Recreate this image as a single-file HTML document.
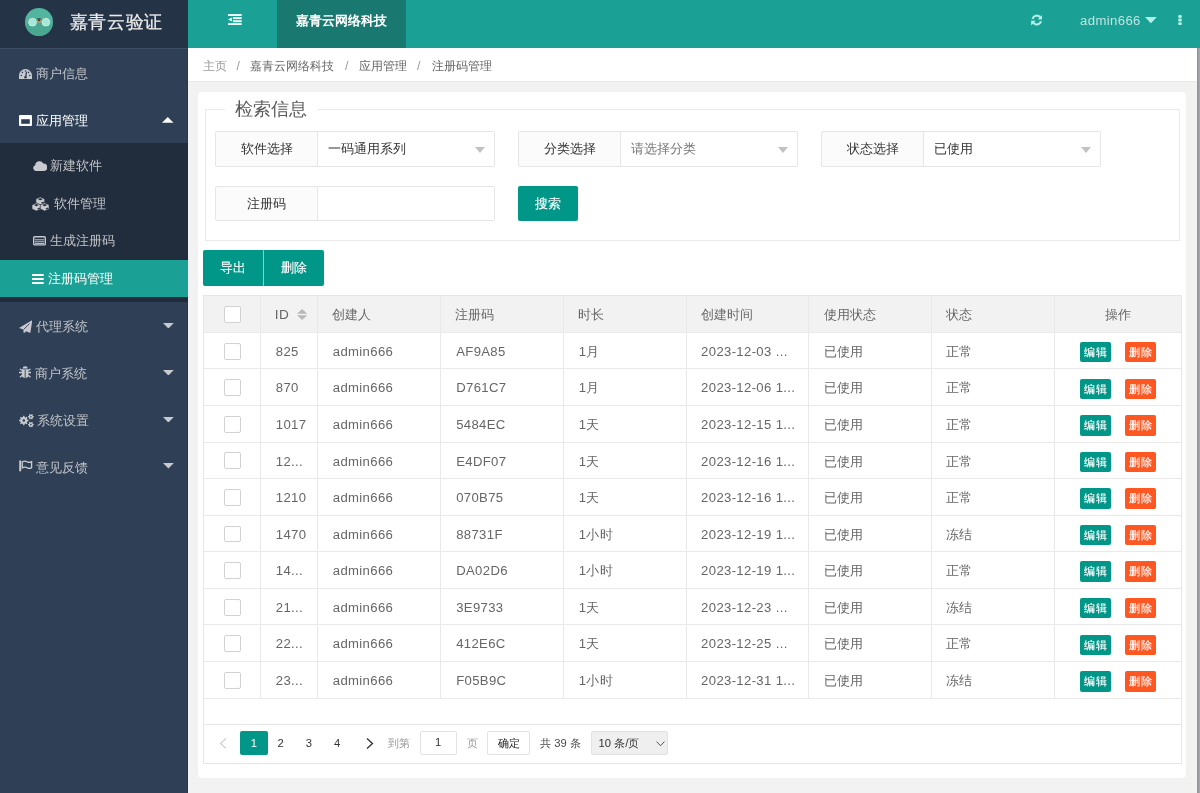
<!DOCTYPE html>
<html><head><meta charset="utf-8">
<style>
*{margin:0;padding:0;box-sizing:border-box}
html{will-change:transform}
html,body{width:1200px;height:793px;overflow:hidden;background:#f2f2f2;font-family:"Liberation Sans",sans-serif;font-size:13.125px;color:#666}
.abs{position:absolute}
svg{display:block}
/* header */
#logo{left:0;top:0;width:187.5px;height:49px;background:#243346;border-bottom:1.1px solid #3b5064}
#logo .t{left:69.5px;top:10px;font-size:18.2px;letter-spacing:.7px;line-height:24px;color:#ececec;-webkit-text-stroke:.25px #ececec;white-space:nowrap}
#hdr{left:187.5px;top:0;width:1012.5px;height:47.8px;background:#1aa094;box-shadow:0 1px 1px rgba(0,30,40,.25)}
#hsel{left:276.6px;top:0;width:129.4px;height:47.8px;background:#197971;color:#fff;font-weight:bold;font-size:13.125px;line-height:41px;text-align:center}
#uname{left:1080px;top:11.8px;line-height:18px;color:rgba(255,255,255,.72);font-size:13.125px;letter-spacing:.4px}
/* side */
#side{left:0;top:48.8px;width:187.5px;height:745px;background:#2f4056;box-shadow:inset -1px 0 1px rgba(0,0,0,.12)}
.mi{position:absolute;left:0;width:187.5px;height:46.875px;line-height:46.875px;color:#c2c4c8;white-space:nowrap}
.mi .tx{position:absolute;top:2px}
.mi svg{position:absolute}
#child{left:0;top:142.6px;width:187.5px;height:159.4px;background:#212d3c}
.ci{position:absolute;left:0;width:187.5px;height:37.5px;line-height:37.5px;color:#c2c4c8;white-space:nowrap}
.ci .tx{position:absolute;top:0.1px}
.ci svg{position:absolute}
/* body */
#crumb{left:187.5px;top:48px;width:1009.5px;height:33.5px;background:#fff;border-bottom:1px solid #e8e8e8;font-size:12.19px;white-space:nowrap}
#crumb span{position:absolute;top:9.6px;line-height:16px;color:#666}
#scroll{left:1197px;top:48px;width:3px;height:745px;background:linear-gradient(90deg,#8e9094,#a9abae)}
#card{left:197.9px;top:92px;width:988.4px;height:685.6px;background:#fff;border-radius:4px}
#fs{left:205px;top:109px;width:975px;height:131.5px;border:1px solid #eaeaea}
#legend{left:224.8px;top:97px;width:93px;height:24px;background:#fff;color:#5a5a5a;font-size:18.2px;line-height:24px;text-align:center;font-weight:300}
.lab{position:absolute;height:35.6px;width:102.7px;padding-left:1.2px;background:#fbfbfb;border:1px solid #e6e6e6;border-radius:2px 0 0 2px;color:#333;text-align:center;line-height:34px;white-space:nowrap}
.inp{position:absolute;height:35.6px;width:177.5px;background:#fff;border:1px solid #e6e6e6;border-left:none;border-radius:0 2px 2px 0;color:#333;padding-left:10.3px;line-height:34px;white-space:nowrap}
.inp.ph{color:#777}
.arr{position:absolute;right:9.2px;top:14.6px;width:0;height:0;border-left:5.6px solid transparent;border-right:5.6px solid transparent;border-top:6px solid #c2c2c2}
.btn{position:absolute;background:#009688;color:#fff;text-align:center;border-radius:2px;white-space:nowrap;-webkit-text-stroke:.12px #fff}
/* table */
#tbl{height:469.4px;border:1px solid #e6e6e6;background:#fff}
.row{position:absolute;left:0;width:977.2px;height:36.5625px;border-bottom:1px solid #e9e9e9}
.row.h{background:#f2f2f2}
.c{position:absolute;top:0;height:100%;border-right:1px solid #e9e9e9;white-space:nowrap;overflow:hidden;line-height:37.8px;padding-left:15px;color:#666;letter-spacing:.35px}
.cb{position:absolute;width:16.8px;height:16.8px;border:1px solid #d2d2d2;border-radius:2px;background:#fff}
.bx{position:absolute;top:9.2px;width:31.4px;height:20.4px;line-height:20.4px;font-size:11.25px;-webkit-text-stroke:.15px #fff;color:#fff;text-align:center;border-radius:2px}
.pgn{top:730.8px;width:20px;height:24.3px;line-height:24.3px;text-align:center;font-size:11.25px;color:#333}
.pgt{top:730.8px;height:24.3px;line-height:24.3px;font-size:11.25px;white-space:nowrap}
#pager{left:0;top:427.9px;width:977.2px;height:40px;border-top:1px solid #e6e6e6}
</style></head><body>
<div id="logo" class="abs">
  <svg class="abs" style="left:25px;top:7.5px" width="28" height="28" viewBox="0 0 28 28">
    <circle cx="14" cy="14" r="14" fill="#52b5a0"/>
    <path d="M0.08 15.5 L11 15.5 L14 14 L17 15.5 L27.92 15.5 A14 14 0 0 1 0.08 15.5 Z" fill="#4aa792"/>
    <path d="M3.2 13.2 Q7.2 9 11.4 12.2 M16.6 12.2 Q20.8 9 24.8 13.2" stroke="#7d7a48" stroke-width="1.2" fill="none"/>
    <circle cx="7.5" cy="14.2" r="3.9" fill="#a6e6d9" stroke="#d6f3ec" stroke-width=".7"/>
    <circle cx="20.9" cy="14.2" r="3.9" fill="#a6e6d9" stroke="#d6f3ec" stroke-width=".7"/>
    <ellipse cx="14" cy="11.2" rx="2.2" ry="1.2" fill="#2d5f50"/>
    <ellipse cx="14" cy="12.8" rx="2.2" ry="1.9" fill="#c48e5f"/>
    <circle cx="14" cy="12.2" r=".9" fill="#2a1c12"/>
  </svg>
  <div class="abs t">嘉青云验证</div>
</div>
<div id="hdr" class="abs"></div>
<svg class="abs" style="left:228.4px;top:13.9px" width="14" height="11.2" viewBox="0 0 14 11.2">
  <rect x="0" y="0" width="13.7" height="2" fill="#eafffb"/>
  <rect x="4.9" y="3.1" width="8.8" height="2" fill="#eafffb"/>
  <rect x="4.9" y="6.2" width="8.8" height="2" fill="#eafffb"/>
  <rect x="0" y="9.2" width="13.7" height="2" fill="#eafffb"/>
  <path d="M3.8 3.6 L0 5.6 L3.8 7.6 Z" fill="#eafffb"/>
</svg>
<div id="hsel" class="abs">嘉青云网络科技</div>
<svg class="abs" style="left:1030.8px;top:14.2px" width="11.6" height="12" viewBox="0 0 11.6 12">
  <path d="M1.55 4.96 A4.4 4.4 0 0 1 9.17 3.27" stroke="#b4efe6" stroke-width="2.1" fill="none"/>
  <path d="M11.5 0.6 V5.4 H6.7 Z" fill="#b4efe6"/>
  <path d="M10.05 7.24 A4.4 4.4 0 0 1 2.43 8.93" stroke="#b4efe6" stroke-width="2.1" fill="none"/>
  <path d="M0.1 11.6 V6.8 H4.9 Z" fill="#b4efe6"/>
</svg>
<div id="uname" class="abs">admin666</div>
<svg class="abs" style="left:1145.2px;top:16.8px" width="11.8" height="6.4" viewBox="0 0 11.8 6.4"><path d="M0 0 H11.8 L5.9 6.4 Z" fill="#b0f0e6"/></svg>
<svg class="abs" style="left:1177.9px;top:15px" width="4" height="10.2" viewBox="0 0 4 10.2">
  <rect x="0.2" y="0" width="3.6" height="3" rx="1.2" fill="#b0f0e6"/><rect x="0.2" y="3.6" width="3.6" height="3" rx="1.2" fill="#b0f0e6"/><rect x="0.2" y="7.2" width="3.6" height="3" rx="1.2" fill="#b0f0e6"/>
</svg>

<div id="side" class="abs"></div>

<div class="mi" style="top:48.8px">
  <svg style="left:18.7px;top:20.5px" width="13" height="10" viewBox="0 0 13 10"><path d="M0 10 L0 6.5 A6.5 6.5 0 0 1 13 6.5 L13 10 Z" fill="#c8cacf"/><path d="M6.5 8.8 L7.6 2.6" stroke="#2f4056" stroke-width="1.3"/><circle cx="6.5" cy="8.3" r="1.3" fill="#2f4056"/><circle cx="2.3" cy="6.5" r=".8" fill="#2f4056"/><circle cx="3.4" cy="3.4" r=".8" fill="#2f4056"/><circle cx="6.5" cy="2" r=".8" fill="#2f4056"/><circle cx="9.6" cy="3.4" r=".8" fill="#2f4056"/><circle cx="10.7" cy="6.5" r=".8" fill="#2f4056"/></svg>
  <span class="tx" style="left:36.4px">商户信息</span>
</div>
<div class="mi" style="top:95.7px;color:#fff">
  <svg style="left:18.7px;top:19.5px" width="13" height="11" viewBox="0 0 13 11"><rect x="0" y="0" width="13" height="11" rx="1" fill="#fff"/><rect x="2.2" y="4.2" width="8.6" height="4.6" fill="#2f4056"/></svg>
  <span class="tx" style="left:36.4px">应用管理</span>
  <svg style="left:162.3px;top:21.4px" width="11.5" height="5.8" viewBox="0 0 11.5 5.8"><path d="M0 5.8 H11.5 L5.75 0 Z" fill="#fff"/></svg>
</div>
<div id="child" class="abs"></div>
<div class="ci" style="top:147.3px">
  <svg style="left:32.7px;top:12.9px" width="14" height="11" viewBox="0 0 14 11"><path d="M3 11 A3 3 0 0 1 2.2 5.2 A4.3 4.3 0 0 1 10.3 3.6 A3.7 3.7 0 0 1 11 11 Z" fill="#c8cacf"/></svg>
  <span class="tx" style="left:50.4px">新建软件</span>
</div>
<div class="ci" style="top:184.8px">
  <svg style="left:32.2px;top:12.2px" width="17.2" height="14.2" viewBox="0 0 17.2 14.2"><g transform="translate(3.9,0)"><path d="M4.4 0 L8.8 2 L8.8 6.1 L4.4 8.1 L0 6.1 L0 2 Z" fill="#c8cacf" stroke="#212d3c" stroke-width=".6"/><path d="M4.4 1.1 L6.9 2.2 L4.4 3.3 L1.9 2.2 Z" fill="#212d3c"/><path d="M5.6 6.1 L7.9 5" stroke="#212d3c" stroke-width="1.1"/></g><g transform="translate(0,5.9)"><path d="M4.4 0 L8.8 2 L8.8 6.1 L4.4 8.1 L0 6.1 L0 2 Z" fill="#c8cacf" stroke="#212d3c" stroke-width=".6"/><path d="M4.4 1.1 L6.9 2.2 L4.4 3.3 L1.9 2.2 Z" fill="#212d3c"/><path d="M5.6 6.1 L7.9 5" stroke="#212d3c" stroke-width="1.1"/></g><g transform="translate(8.3,5.9)"><path d="M4.4 0 L8.8 2 L8.8 6.1 L4.4 8.1 L0 6.1 L0 2 Z" fill="#c8cacf" stroke="#212d3c" stroke-width=".6"/><path d="M4.4 1.1 L6.9 2.2 L4.4 3.3 L1.9 2.2 Z" fill="#212d3c"/><path d="M5.6 6.1 L7.9 5" stroke="#212d3c" stroke-width="1.1"/></g></svg>
  <span class="tx" style="left:54px">软件管理</span>
</div>
<div class="ci" style="top:222.3px">
  <svg style="left:32.7px;top:14.1px" width="13" height="9.6" viewBox="0 0 13 9.6"><rect x=".7" y=".7" width="11.6" height="8.2" rx="1" fill="none" stroke="#c8cacf" stroke-width="1.4"/><rect x="2" y="3.3" width="9" height="1" fill="#c8cacf"/><rect x="2" y="5.3" width="9" height="1" fill="#c8cacf"/><rect x="2" y="7" width="9" height=".9" fill="#c8cacf"/></svg>
  <span class="tx" style="left:50px">生成注册码</span>
</div>
<div class="ci" style="top:259.8px;background:#1aa094;color:#fff">
  <svg style="left:32.3px;top:14.4px" width="11.7" height="10.1" viewBox="0 0 11.7 10.1"><rect x="0" y="0" width="11.7" height="2" fill="#fff"/><rect x="0" y="4" width="11.7" height="2" fill="#fff"/><rect x="0" y="8.1" width="11.7" height="2" fill="#fff"/></svg>
  <span class="tx" style="left:48.4px">注册码管理</span>
</div>
<div class="mi" style="top:302px">
  <svg style="left:18.5px;top:17.5px" width="13.5" height="13.5" viewBox="0 0 13.5 13.5"><path d="M13.4 0 L0 8 L4.4 9.6 L4.7 13.4 L7.2 11.3 L11.3 12.9 Z" fill="#c8cacf"/><path d="M10.6 3.6 L4.7 9.4" stroke="#2f4056" stroke-width=".9"/></svg>
  <span class="tx" style="left:35.8px">代理系统</span>
  <svg style="left:162.8px;top:20.8px" width="10.8" height="5.5" viewBox="0 0 10.8 5.5"><path d="M0 0 H10.8 L5.4 5.5 Z" fill="#c8cacf"/></svg>
</div>
<div class="mi" style="top:348.9px">
  <svg style="left:18.8px;top:17.6px" width="12.4" height="12.8" viewBox="0 0 12.4 12.8"><path d="M3.6 2.6 A2.6 2.3 0 0 1 8.8 2.6 Z" fill="#c8cacf"/><path d="M3 3.2 H9.4 V9.5 Q9.4 11.8 6.2 11.8 Q3 11.8 3 9.5 Z" fill="#c8cacf"/><path d="M6.2 3.6 V11.6" stroke="#2f4056" stroke-width=".9"/><path d="M0.9 2.9 L3.2 4.6 M0 6.5 H3.2 M0.9 11.3 L3.2 9.2 M11.5 2.9 L9.2 4.6 M12.4 6.5 H9.2 M11.5 11.3 L9.2 9.2" stroke="#c8cacf" stroke-width="1.3"/></svg>
  <span class="tx" style="left:35.3px">商户系统</span>
  <svg style="left:162.8px;top:20.8px" width="10.8" height="5.5" viewBox="0 0 10.8 5.5"><path d="M0 0 H10.8 L5.4 5.5 Z" fill="#c8cacf"/></svg>
</div>
<div class="mi" style="top:395.8px">
  <svg style="left:18.5px;top:17px" width="16" height="16" viewBox="0 0 16 16"><path fill-rule="evenodd" d="M8.13 6.12 L8.32 6.73 L9.46 6.86 L9.46 8.14 L8.32 8.27 L8.13 8.88 L7.83 9.44 L8.54 10.34 L7.64 11.24 L6.74 10.53 L6.18 10.83 L5.57 11.02 L5.44 12.16 L4.16 12.16 L4.03 11.02 L3.42 10.83 L2.86 10.53 L1.96 11.24 L1.06 10.34 L1.77 9.44 L1.47 8.88 L1.28 8.27 L0.14 8.14 L0.14 6.86 L1.28 6.73 L1.47 6.12 L1.77 5.56 L1.06 4.66 L1.96 3.76 L2.86 4.47 L3.42 4.17 L4.03 3.98 L4.16 2.84 L5.44 2.84 L5.57 3.98 L6.18 4.17 L6.74 4.47 L7.64 3.76 L8.54 4.66 L7.83 5.56 Z M6.10 7.50 A1.3 1.3 0 1 0 3.50 7.50 A1.3 1.3 0 1 0 6.10 7.50 Z M13.72 2.65 L13.91 3.10 L14.74 3.10 L14.74 4.30 L13.91 4.30 L13.72 4.75 L13.42 5.15 L13.84 5.86 L12.80 6.46 L12.39 5.74 L11.90 5.80 L11.41 5.74 L11.00 6.46 L9.96 5.86 L10.38 5.15 L10.08 4.75 L9.89 4.30 L9.06 4.30 L9.06 3.10 L9.89 3.10 L10.08 2.65 L10.38 2.25 L9.96 1.54 L11.00 0.94 L11.41 1.66 L11.90 1.60 L12.39 1.66 L12.80 0.94 L13.84 1.54 L13.42 2.25 Z M12.70 3.70 A0.8 0.8 0 1 0 11.10 3.70 A0.8 0.8 0 1 0 12.70 3.70 Z M13.72 10.55 L13.91 11.00 L14.74 11.00 L14.74 12.20 L13.91 12.20 L13.72 12.65 L13.42 13.05 L13.84 13.76 L12.80 14.36 L12.39 13.64 L11.90 13.70 L11.41 13.64 L11.00 14.36 L9.96 13.76 L10.38 13.05 L10.08 12.65 L9.89 12.20 L9.06 12.20 L9.06 11.00 L9.89 11.00 L10.08 10.55 L10.38 10.15 L9.96 9.44 L11.00 8.84 L11.41 9.56 L11.90 9.50 L12.39 9.56 L12.80 8.84 L13.84 9.44 L13.42 10.15 Z M12.70 11.60 A0.8 0.8 0 1 0 11.10 11.60 A0.8 0.8 0 1 0 12.70 11.60 Z" fill="#c8cacf"/></svg>
  <span class="tx" style="left:37.1px">系统设置</span>
  <svg style="left:162.8px;top:20.8px" width="10.8" height="5.5" viewBox="0 0 10.8 5.5"><path d="M0 0 H10.8 L5.4 5.5 Z" fill="#c8cacf"/></svg>
</div>
<div class="mi" style="top:442.7px">
  <svg style="left:18.8px;top:17.6px" width="14" height="12" viewBox="0 0 14 12"><rect x="0.2" y="0.2" width="2" height="11.4" rx="1" fill="#c8cacf"/><path d="M3.3 1.8 Q6 0.4 8.2 1.8 Q10.5 3 12.6 1.6 V7.6 Q10.5 9 8.2 7.8 Q6 6.4 3.3 7.8 Z" fill="none" stroke="#c8cacf" stroke-width="1.3"/></svg>
  <span class="tx" style="left:36.1px">意见反馈</span>
  <svg style="left:162.8px;top:20.8px" width="10.8" height="5.5" viewBox="0 0 10.8 5.5"><path d="M0 0 H10.8 L5.4 5.5 Z" fill="#c8cacf"/></svg>
</div>


<div id="crumb" class="abs">
  <span style="left:15.5px;color:#999">主页</span>
  <span style="left:49px;color:#999">/</span>
  <span style="left:62.7px">嘉青云网络科技</span>
  <span style="left:157.5px;color:#999">/</span>
  <span style="left:171px">应用管理</span>
  <span style="left:229.5px;color:#999">/</span>
  <span style="left:244px">注册码管理</span>
</div>
<div id="scroll" class="abs"></div>
<div id="card" class="abs"></div>

<div id="fs" class="abs"></div>
<div id="legend" class="abs">检索信息</div>
<div class="lab" style="left:215px;top:131px">软件选择</div>
<div class="inp" style="left:317.7px;top:131px">一码通用系列<i class="arr"></i></div>
<div class="lab" style="left:518.2px;top:131px">分类选择</div>
<div class="inp ph" style="left:620.9px;top:131px;width:177.6px">请选择分类<i class="arr"></i></div>
<div class="lab" style="left:821.1px;top:131px">状态选择</div>
<div class="inp" style="left:923.8px;top:131px;width:177.2px">已使用<i class="arr"></i></div>
<div class="lab" style="left:215px;top:185.7px">注册码</div>
<div class="inp" style="left:317.7px;top:185.7px"></div>
<div class="btn" style="left:517.7px;top:185.7px;width:60px;height:35px;line-height:35px">搜索</div>
<div class="btn" style="left:203.2px;top:250.1px;width:120.4px;height:35.5px;line-height:35.5px">
  <span class="abs" style="left:0;top:0;width:60px">导出</span>
  <span class="abs" style="left:59.9px;top:0;width:0.8px;height:35.5px;background:rgba(255,255,255,.55)"></span>
  <span class="abs" style="left:60.5px;top:0;width:60px">删除</span>
</div>


<div id="tbl" class="abs" style="left:203.0px;top:294.7px;width:979.2px">
<div class="row h" style="top:0;height:37.20px">
<div class="c" style="left:0.00px;width:56.80px;padding:0"><i class="cb" style="left:19.8px;top:10.3px"></i></div>
<div class="c" style="left:56.80px;width:57.00px;padding-left:14px;line-height:37.4px;font-size:13.6px">ID<svg class="abs" style="left:36px;top:13.8px" width="10.2" height="11" viewBox="0 0 10.2 11"><path d="M0 4.8 L5.1 0 L10.2 4.8 Z M0 6.2 H10.2 L5.1 11 Z" fill="#b8b8b8"/></svg></div>
<div class="c" style="left:113.80px;width:123.40px;padding-left:14px;line-height:38.8px;letter-spacing:0">创建人</div>
<div class="c" style="left:237.20px;width:122.60px;padding-left:14px;line-height:38.8px;letter-spacing:0">注册码</div>
<div class="c" style="left:359.80px;width:123.30px;padding-left:14px;line-height:38.8px;letter-spacing:0">时长</div>
<div class="c" style="left:483.10px;width:122.40px;padding-left:14px;line-height:38.8px;letter-spacing:0">创建时间</div>
<div class="c" style="left:605.50px;width:122.70px;padding-left:14px;line-height:38.8px;letter-spacing:0">使用状态</div>
<div class="c" style="left:728.20px;width:122.60px;padding-left:14px;line-height:38.8px;letter-spacing:0">状态</div>
<div class="c" style="left:850.80px;width:127.40px;border-right:none;padding:0;text-align:center">操作</div>
</div>
<div class="row" style="top:37.20px">
<div class="c" style="left:0.00px;width:56.80px;padding:0"><i class="cb" style="left:19.8px;top:9.9px"></i></div>
<div class="c" style="left:56.80px;width:57.00px">825</div>
<div class="c" style="left:113.80px;width:123.40px">admin666</div>
<div class="c" style="left:237.20px;width:122.60px">AF9A85</div>
<div class="c" style="left:359.80px;width:123.30px;line-height:37px">1月</div>
<div class="c" style="left:483.10px;width:122.40px;padding-left:14px">2023-12-03 ...</div>
<div class="c" style="left:605.50px;width:122.70px;padding-left:14px;line-height:37.1px;letter-spacing:0">已使用</div>
<div class="c" style="left:728.20px;width:122.60px;padding-left:14px;line-height:37.1px;letter-spacing:0">正常</div>
<div class="c" style="left:850.80px;width:127.40px;border-right:none;padding:0"><span class="bx" style="left:25.1px;background:#009688">编辑</span><span class="bx" style="left:70.1px;background:#ff5722">删除</span></div>
</div>
<div class="row" style="top:73.76px">
<div class="c" style="left:0.00px;width:56.80px;padding:0"><i class="cb" style="left:19.8px;top:9.9px"></i></div>
<div class="c" style="left:56.80px;width:57.00px">870</div>
<div class="c" style="left:113.80px;width:123.40px">admin666</div>
<div class="c" style="left:237.20px;width:122.60px">D761C7</div>
<div class="c" style="left:359.80px;width:123.30px;line-height:37px">1月</div>
<div class="c" style="left:483.10px;width:122.40px;padding-left:14px">2023-12-06 1...</div>
<div class="c" style="left:605.50px;width:122.70px;padding-left:14px;line-height:37.1px;letter-spacing:0">已使用</div>
<div class="c" style="left:728.20px;width:122.60px;padding-left:14px;line-height:37.1px;letter-spacing:0">正常</div>
<div class="c" style="left:850.80px;width:127.40px;border-right:none;padding:0"><span class="bx" style="left:25.1px;background:#009688">编辑</span><span class="bx" style="left:70.1px;background:#ff5722">删除</span></div>
</div>
<div class="row" style="top:110.32px">
<div class="c" style="left:0.00px;width:56.80px;padding:0"><i class="cb" style="left:19.8px;top:9.9px"></i></div>
<div class="c" style="left:56.80px;width:57.00px">1017</div>
<div class="c" style="left:113.80px;width:123.40px">admin666</div>
<div class="c" style="left:237.20px;width:122.60px">5484EC</div>
<div class="c" style="left:359.80px;width:123.30px;line-height:37px">1天</div>
<div class="c" style="left:483.10px;width:122.40px;padding-left:14px">2023-12-15 1...</div>
<div class="c" style="left:605.50px;width:122.70px;padding-left:14px;line-height:37.1px;letter-spacing:0">已使用</div>
<div class="c" style="left:728.20px;width:122.60px;padding-left:14px;line-height:37.1px;letter-spacing:0">正常</div>
<div class="c" style="left:850.80px;width:127.40px;border-right:none;padding:0"><span class="bx" style="left:25.1px;background:#009688">编辑</span><span class="bx" style="left:70.1px;background:#ff5722">删除</span></div>
</div>
<div class="row" style="top:146.89px">
<div class="c" style="left:0.00px;width:56.80px;padding:0"><i class="cb" style="left:19.8px;top:9.9px"></i></div>
<div class="c" style="left:56.80px;width:57.00px">12...</div>
<div class="c" style="left:113.80px;width:123.40px">admin666</div>
<div class="c" style="left:237.20px;width:122.60px">E4DF07</div>
<div class="c" style="left:359.80px;width:123.30px;line-height:37px">1天</div>
<div class="c" style="left:483.10px;width:122.40px;padding-left:14px">2023-12-16 1...</div>
<div class="c" style="left:605.50px;width:122.70px;padding-left:14px;line-height:37.1px;letter-spacing:0">已使用</div>
<div class="c" style="left:728.20px;width:122.60px;padding-left:14px;line-height:37.1px;letter-spacing:0">正常</div>
<div class="c" style="left:850.80px;width:127.40px;border-right:none;padding:0"><span class="bx" style="left:25.1px;background:#009688">编辑</span><span class="bx" style="left:70.1px;background:#ff5722">删除</span></div>
</div>
<div class="row" style="top:183.45px">
<div class="c" style="left:0.00px;width:56.80px;padding:0"><i class="cb" style="left:19.8px;top:9.9px"></i></div>
<div class="c" style="left:56.80px;width:57.00px">1210</div>
<div class="c" style="left:113.80px;width:123.40px">admin666</div>
<div class="c" style="left:237.20px;width:122.60px">070B75</div>
<div class="c" style="left:359.80px;width:123.30px;line-height:37px">1天</div>
<div class="c" style="left:483.10px;width:122.40px;padding-left:14px">2023-12-16 1...</div>
<div class="c" style="left:605.50px;width:122.70px;padding-left:14px;line-height:37.1px;letter-spacing:0">已使用</div>
<div class="c" style="left:728.20px;width:122.60px;padding-left:14px;line-height:37.1px;letter-spacing:0">正常</div>
<div class="c" style="left:850.80px;width:127.40px;border-right:none;padding:0"><span class="bx" style="left:25.1px;background:#009688">编辑</span><span class="bx" style="left:70.1px;background:#ff5722">删除</span></div>
</div>
<div class="row" style="top:220.01px">
<div class="c" style="left:0.00px;width:56.80px;padding:0"><i class="cb" style="left:19.8px;top:9.9px"></i></div>
<div class="c" style="left:56.80px;width:57.00px">1470</div>
<div class="c" style="left:113.80px;width:123.40px">admin666</div>
<div class="c" style="left:237.20px;width:122.60px">88731F</div>
<div class="c" style="left:359.80px;width:123.30px;line-height:37px">1小时</div>
<div class="c" style="left:483.10px;width:122.40px;padding-left:14px">2023-12-19 1...</div>
<div class="c" style="left:605.50px;width:122.70px;padding-left:14px;line-height:37.1px;letter-spacing:0">已使用</div>
<div class="c" style="left:728.20px;width:122.60px;padding-left:14px;line-height:37.1px;letter-spacing:0">冻结</div>
<div class="c" style="left:850.80px;width:127.40px;border-right:none;padding:0"><span class="bx" style="left:25.1px;background:#009688">编辑</span><span class="bx" style="left:70.1px;background:#ff5722">删除</span></div>
</div>
<div class="row" style="top:256.57px">
<div class="c" style="left:0.00px;width:56.80px;padding:0"><i class="cb" style="left:19.8px;top:9.9px"></i></div>
<div class="c" style="left:56.80px;width:57.00px">14...</div>
<div class="c" style="left:113.80px;width:123.40px">admin666</div>
<div class="c" style="left:237.20px;width:122.60px">DA02D6</div>
<div class="c" style="left:359.80px;width:123.30px;line-height:37px">1小时</div>
<div class="c" style="left:483.10px;width:122.40px;padding-left:14px">2023-12-19 1...</div>
<div class="c" style="left:605.50px;width:122.70px;padding-left:14px;line-height:37.1px;letter-spacing:0">已使用</div>
<div class="c" style="left:728.20px;width:122.60px;padding-left:14px;line-height:37.1px;letter-spacing:0">正常</div>
<div class="c" style="left:850.80px;width:127.40px;border-right:none;padding:0"><span class="bx" style="left:25.1px;background:#009688">编辑</span><span class="bx" style="left:70.1px;background:#ff5722">删除</span></div>
</div>
<div class="row" style="top:293.14px">
<div class="c" style="left:0.00px;width:56.80px;padding:0"><i class="cb" style="left:19.8px;top:9.9px"></i></div>
<div class="c" style="left:56.80px;width:57.00px">21...</div>
<div class="c" style="left:113.80px;width:123.40px">admin666</div>
<div class="c" style="left:237.20px;width:122.60px">3E9733</div>
<div class="c" style="left:359.80px;width:123.30px;line-height:37px">1天</div>
<div class="c" style="left:483.10px;width:122.40px;padding-left:14px">2023-12-23 ...</div>
<div class="c" style="left:605.50px;width:122.70px;padding-left:14px;line-height:37.1px;letter-spacing:0">已使用</div>
<div class="c" style="left:728.20px;width:122.60px;padding-left:14px;line-height:37.1px;letter-spacing:0">冻结</div>
<div class="c" style="left:850.80px;width:127.40px;border-right:none;padding:0"><span class="bx" style="left:25.1px;background:#009688">编辑</span><span class="bx" style="left:70.1px;background:#ff5722">删除</span></div>
</div>
<div class="row" style="top:329.70px">
<div class="c" style="left:0.00px;width:56.80px;padding:0"><i class="cb" style="left:19.8px;top:9.9px"></i></div>
<div class="c" style="left:56.80px;width:57.00px">22...</div>
<div class="c" style="left:113.80px;width:123.40px">admin666</div>
<div class="c" style="left:237.20px;width:122.60px">412E6C</div>
<div class="c" style="left:359.80px;width:123.30px;line-height:37px">1天</div>
<div class="c" style="left:483.10px;width:122.40px;padding-left:14px">2023-12-25 ...</div>
<div class="c" style="left:605.50px;width:122.70px;padding-left:14px;line-height:37.1px;letter-spacing:0">已使用</div>
<div class="c" style="left:728.20px;width:122.60px;padding-left:14px;line-height:37.1px;letter-spacing:0">正常</div>
<div class="c" style="left:850.80px;width:127.40px;border-right:none;padding:0"><span class="bx" style="left:25.1px;background:#009688">编辑</span><span class="bx" style="left:70.1px;background:#ff5722">删除</span></div>
</div>
<div class="row" style="top:366.26px">
<div class="c" style="left:0.00px;width:56.80px;padding:0"><i class="cb" style="left:19.8px;top:9.9px"></i></div>
<div class="c" style="left:56.80px;width:57.00px">23...</div>
<div class="c" style="left:113.80px;width:123.40px">admin666</div>
<div class="c" style="left:237.20px;width:122.60px">F05B9C</div>
<div class="c" style="left:359.80px;width:123.30px;line-height:37px">1小时</div>
<div class="c" style="left:483.10px;width:122.40px;padding-left:14px">2023-12-31 1...</div>
<div class="c" style="left:605.50px;width:122.70px;padding-left:14px;line-height:37.1px;letter-spacing:0">已使用</div>
<div class="c" style="left:728.20px;width:122.60px;padding-left:14px;line-height:37.1px;letter-spacing:0">冻结</div>
<div class="c" style="left:850.80px;width:127.40px;border-right:none;padding:0"><span class="bx" style="left:25.1px;background:#009688">编辑</span><span class="bx" style="left:70.1px;background:#ff5722">删除</span></div>
</div>
<div id="pager" class="abs"></div>
</div>


<svg class="abs" style="left:219.1px;top:738.4px" width="8" height="11" viewBox="0 0 8 11"><path d="M7 0.5 L1.5 5.5 L7 10.5" fill="none" stroke="#d2d2d2" stroke-width="1.3"/></svg>
<div class="abs" style="left:240.3px;top:730.8px;width:27.3px;height:24.3px;background:#009688;border-radius:2px;color:#fff;text-align:center;line-height:24.3px;font-size:11.25px">1</div>
<div class="abs pgn" style="left:270.7px">2</div>
<div class="abs pgn" style="left:299px">3</div>
<div class="abs pgn" style="left:327.2px">4</div>
<svg class="abs" style="left:366.2px;top:738.4px" width="8" height="11" viewBox="0 0 8 11"><path d="M1 0.5 L6.5 5.5 L1 10.5" fill="none" stroke="#333" stroke-width="1.3"/></svg>
<div class="abs pgt" style="left:388.1px;color:#999">到第</div>
<div class="abs" style="left:419.8px;top:731.3px;width:36.8px;height:23.8px;border:1px solid #e2e2e2;border-radius:2px;background:#fff;color:#333;text-align:center;line-height:21.8px;font-size:11.25px">1</div>
<div class="abs pgt" style="left:466.9px;color:#999">页</div>
<div class="abs" style="left:487.2px;top:731.1px;width:43px;height:24.4px;border:1px solid #e2e2e2;border-radius:2px;background:#fff;color:#1a1a1a;text-align:center;line-height:22.4px;font-size:11.25px">确定</div>
<div class="abs pgt" style="left:540.1px;color:#4a4a4a">共 39 条</div>
<div class="abs" style="left:591.1px;top:731px;width:76.9px;height:24px;border:1px solid #e2e2e2;border-radius:2px;background:#efefef;color:#333;line-height:22px;font-size:11.25px;padding-left:6.5px;white-space:nowrap">10 条/页<svg class="abs" style="left:63.5px;top:9px" width="9" height="6" viewBox="0 0 9 6"><path d="M0.6 0.6 L4.5 4.8 L8.4 0.6" fill="none" stroke="#555" stroke-width="1"/></svg></div>
</body></html>
